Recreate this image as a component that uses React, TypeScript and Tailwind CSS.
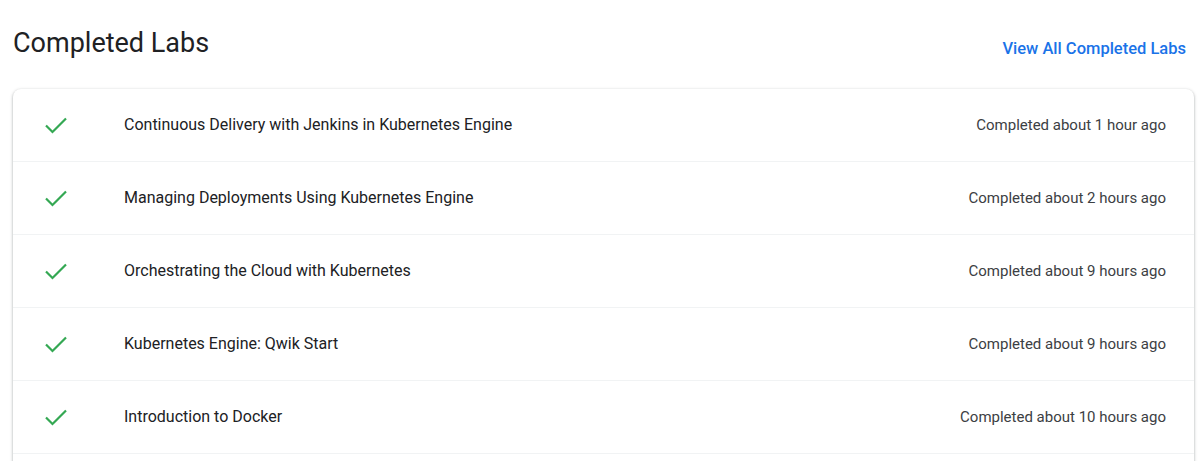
const labs = [
  { title: 'Continuous Delivery with Jenkins in Kubernetes Engine', when: 'Completed about 1 hour ago' },
  { title: 'Managing Deployments Using Kubernetes Engine', when: 'Completed about 2 hours ago' },
  { title: 'Orchestrating the Cloud with Kubernetes', when: 'Completed about 9 hours ago' },
  { title: 'Kubernetes Engine: Qwik Start', when: 'Completed about 9 hours ago' },
  { title: 'Introduction to Docker', when: 'Completed about 10 hours ago' },
]

function CheckIcon() {
  return (
    <svg width="22" height="17" viewBox="0 0 22 17" fill="none" className="shrink-0">
      <path d="M1 8.5 7.5 15 21 1.5" stroke="#34a853" strokeWidth="2.2" />
    </svg>
  )
}

function LabRow({ title, when }: { title: string; when: string }) {
  return (
    <div className="flex items-center h-[73px] border-b border-[#f1f3f4] pl-[32px] pr-[28px]">
      <div className="w-[79px] flex items-center">
        <CheckIcon />
      </div>
      <div className="flex-1 text-[16px] text-[#202124]">{title}</div>
      <div className="text-[15px] text-[#3c4043]">{when}</div>
    </div>
  )
}

export default function App() {
  return (
    <div className="h-screen overflow-hidden bg-white font-['Roboto',sans-serif]">
      <div className="flex justify-between items-start pt-[25px] pl-[13px] pr-[14px]">
        <h1 className="text-[27px] leading-[36px] text-[#202124]">Completed Labs</h1>
        <a href="#" className="mt-[12px] text-[16.5px] leading-[24px] font-medium text-[#1a73e8]">
          View All Completed Labs
        </a>
      </div>
      <div className="mt-[28px] ml-[13px] mr-[6px] rounded-lg bg-white shadow-[0_1px_2px_0_rgba(60,64,67,0.3),0_1px_3px_1px_rgba(60,64,67,0.15)]">
        {labs.map(l => <LabRow key={l.title} title={l.title} when={l.when} />)}
        <div className="h-[73px]" />
      </div>
    </div>
  )
}
